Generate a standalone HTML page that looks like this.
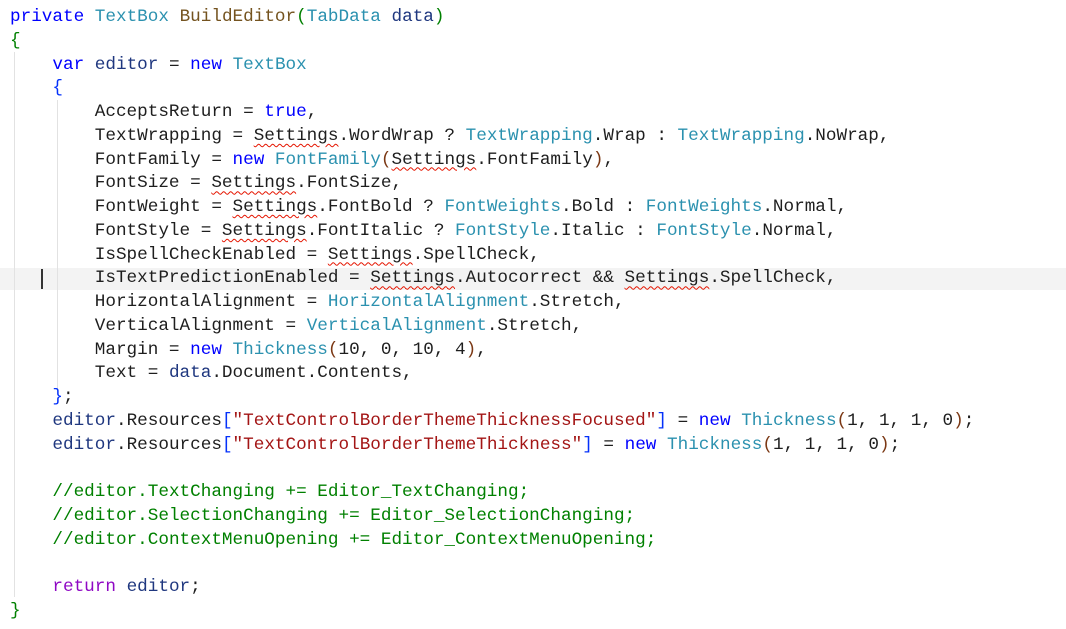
<!DOCTYPE html>
<html><head><meta charset="utf-8"><style>
html,body{margin:0;padding:0;background:#fff;width:1066px;height:629px;overflow:hidden}
#code{position:absolute;left:10px;top:6px;font-family:"Liberation Mono",monospace;font-size:17.67px;color:#1e1e1e}
#code div{height:23.75px;line-height:23.75px;white-space:pre;overflow:visible}
.k{color:#0000ff}.t{color:#2b91af}.m{color:#74531f}.v{color:#1f377f}.s{color:#a31515}.c{color:#008000}.g{color:#008000}.b{color:#0431fa}.br{color:#7b3814}
.w{text-decoration:underline wavy #e51400;text-decoration-thickness:1px;text-underline-offset:3px}
.hl{position:absolute;left:0;top:268px;width:1066px;height:22px;background:#f3f3f3}
.cur{position:absolute;left:41px;top:269px;width:2px;height:20px;background:#333}
.gd{position:absolute;width:1px;background:#e2e2e2}
</style></head><body>
<div class="hl"></div>
<div class="gd" style="left:14px;top:52px;height:545px"></div>
<div class="gd" style="left:57px;top:100px;height:290px"></div>
<div class="cur"></div>
<div id="code">
<div><span class="k">private</span> <span class="t">TextBox</span> <span class="m">BuildEditor</span><span class="g">(</span><span class="t">TabData</span> <span class="v">data</span><span class="g">)</span></div>
<div><span class="g">{</span></div>
<div>    <span class="k">var</span> <span class="v">editor</span> = <span class="k">new</span> <span class="t">TextBox</span></div>
<div>    <span class="b">{</span></div>
<div>        AcceptsReturn = <span class="k">true</span>,</div>
<div>        TextWrapping = <span class="w">Settings</span>.WordWrap ? <span class="t">TextWrapping</span>.Wrap : <span class="t">TextWrapping</span>.NoWrap,</div>
<div>        FontFamily = <span class="k">new</span> <span class="t">FontFamily</span><span class="br">(</span><span class="w">Settings</span>.FontFamily<span class="br">)</span>,</div>
<div>        FontSize = <span class="w">Settings</span>.FontSize,</div>
<div>        FontWeight = <span class="w">Settings</span>.FontBold ? <span class="t">FontWeights</span>.Bold : <span class="t">FontWeights</span>.Normal,</div>
<div>        FontStyle = <span class="w">Settings</span>.FontItalic ? <span class="t">FontStyle</span>.Italic : <span class="t">FontStyle</span>.Normal,</div>
<div>        IsSpellCheckEnabled = <span class="w">Settings</span>.SpellCheck,</div>
<div>        IsTextPredictionEnabled = <span class="w">Settings</span>.Autocorrect &amp;&amp; <span class="w">Settings</span>.SpellCheck,</div>
<div>        HorizontalAlignment = <span class="t">HorizontalAlignment</span>.Stretch,</div>
<div>        VerticalAlignment = <span class="t">VerticalAlignment</span>.Stretch,</div>
<div>        Margin = <span class="k">new</span> <span class="t">Thickness</span><span class="br">(</span>10, 0, 10, 4<span class="br">)</span>,</div>
<div>        Text = <span class="v">data</span>.Document.Contents,</div>
<div>    <span class="b">}</span>;</div>
<div>    <span class="v">editor</span>.Resources<span class="b">[</span><span class="s">"TextControlBorderThemeThicknessFocused"</span><span class="b">]</span> = <span class="k">new</span> <span class="t">Thickness</span><span class="br">(</span>1, 1, 1, 0<span class="br">)</span>;</div>
<div>    <span class="v">editor</span>.Resources<span class="b">[</span><span class="s">"TextControlBorderThemeThickness"</span><span class="b">]</span> = <span class="k">new</span> <span class="t">Thickness</span><span class="br">(</span>1, 1, 1, 0<span class="br">)</span>;</div>
<div> </div>
<div>    <span class="c">//editor.TextChanging += Editor_TextChanging;</span></div>
<div>    <span class="c">//editor.SelectionChanging += Editor_SelectionChanging;</span></div>
<div>    <span class="c">//editor.ContextMenuOpening += Editor_ContextMenuOpening;</span></div>
<div> </div>
<div>    <span class="k" style="color:#8f08c4">return</span> <span class="v">editor</span>;</div>
<div><span class="g">}</span></div>
</div>
</body></html>
